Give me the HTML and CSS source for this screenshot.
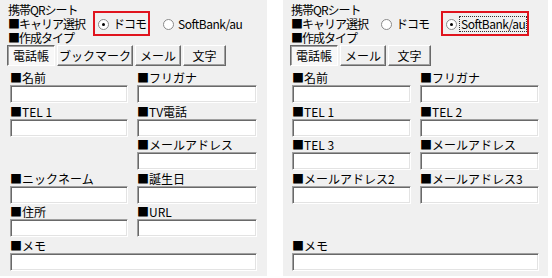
FILE: index.html
```html
<!DOCTYPE html>
<html lang="ja">
<head>
    <meta charset="UTF-8">
    <title>携帯QRシート</title>
    <link rel="stylesheet" href="styles.css">
</head>
<body>
    <div class="screens">
        <div class="sheet sheet-docomo">
            <div class="line">携帯QRシート</div>
            <div class="line carrier">
                <span class="carrier-lbl">■キャリア選択</span>
                <div class="radios">
                    <label class="opt opt-docomo marked"><span class="dot on"></span><span class="opt-text">ドコモ</span></label>
                    <label class="opt"><span class="dot"></span><span class="opt-text sb">SoftBank/au</span></label>
                </div>
            </div>
            <div class="line">■作成タイプ</div>
            <div class="tabs">
                <button class="tab pressed w-tel">電話帳</button>
                <button class="tab w-bm">ブックマーク</button>
                <button class="tab w-mail">メール</button>
                <button class="tab w-text">文字</button>
            </div>
            <div class="fields">
                <div class="field"><div class="lbl">■名前</div><input type="text"></div>
                <div class="field"><div class="lbl">■フリガナ</div><input type="text"></div>
                <div class="field"><div class="lbl">■TEL 1</div><input type="text"></div>
                <div class="field"><div class="lbl">■TV電話</div><input type="text"></div>
                <div class="field"></div>
                <div class="field"><div class="lbl">■メールアドレス</div><input type="text"></div>
                <div class="field"><div class="lbl">■ニックネーム</div><input type="text"></div>
                <div class="field"><div class="lbl">■誕生日</div><input type="text"></div>
                <div class="field"><div class="lbl">■住所</div><input type="text"></div>
                <div class="field"><div class="lbl">■URL</div><input type="text"></div>
                <div class="field wide"><div class="lbl">■メモ</div><input type="text"></div>
            </div>
        </div>

        <div class="sheet sheet-softbank">
            <div class="line">携帯QRシート</div>
            <div class="line carrier">
                <span class="carrier-lbl">■キャリア選択</span>
                <div class="radios">
                    <label class="opt opt-docomo"><span class="dot"></span><span class="opt-text">ドコモ</span></label>
                    <label class="opt marked"><span class="dot on"></span><span class="opt-text sb focus">SoftBank/au</span></label>
                </div>
            </div>
            <div class="line">■作成タイプ</div>
            <div class="tabs">
                <button class="tab pressed w-tel">電話帳</button>
                <button class="tab w-mail">メール</button>
                <button class="tab w-text">文字</button>
            </div>
            <div class="fields">
                <div class="field"><div class="lbl">■名前</div><input type="text"></div>
                <div class="field"><div class="lbl">■フリガナ</div><input type="text"></div>
                <div class="field"><div class="lbl">■TEL 1</div><input type="text"></div>
                <div class="field"><div class="lbl">■TEL 2</div><input type="text"></div>
                <div class="field"><div class="lbl">■TEL 3</div><input type="text"></div>
                <div class="field"><div class="lbl">■メールアドレス</div><input type="text"></div>
                <div class="field"><div class="lbl">■メールアドレス2</div><input type="text"></div>
                <div class="field"><div class="lbl">■メールアドレス3</div><input type="text"></div>
                <div class="field"></div>
                <div class="field"></div>
                <div class="field wide"><div class="lbl">■メモ</div><input type="text"></div>
            </div>
        </div>
    </div>
</body>
</html>
```

FILE: styles.css
```css
body {
    margin: 0;
    background-color: white;
    font-family: "Noto Sans CJK JP", "Noto Sans", sans-serif;
    font-size: 12px;
    color: black;
}
.screens { display: flex; gap: 16px; }
.sheet {
    background-color: #f0f0f0;
    height: 276px;
    box-sizing: border-box;
    padding: 3px 8px 0 8px;
}
.sheet-docomo { width: 267px; }
.sheet-softbank { width: 265px; }
.line { height: 14px; line-height: 14px; white-space: nowrap; letter-spacing: -1px; }

.carrier { display: flex; }
.carrier-lbl { width: 90px; flex: none; }
.radios { display: flex; align-items: center; letter-spacing: 0; }
.opt { position: relative; display: flex; align-items: center; gap: 3px; }
.opt-docomo { margin-right: 16px; }
.opt-docomo .opt-text { letter-spacing: -1px; }
.dot {
    width: 11px; height: 11px;
    box-sizing: border-box;
    border-radius: 50%;
    border: 1px solid #8a8a8a;
    background-color: white;
    display: flex; align-items: center; justify-content: center;
}
.dot.on::before {
    content: "";
    width: 3px; height: 3px;
    border-radius: 50%;
    background-color: black;
}
.opt-text { padding: 0 1px; }
.opt-text.sb { letter-spacing: -0.5px; }
.opt-text.focus { outline: 1px dotted #333; outline-offset: 0; }
.marked::after {
    content: "";
    position: absolute;
    top: -6px; bottom: -5px; left: -5px; right: -3px;
    border: 2px solid #e0141e;
}

.tabs { display: flex; gap: 2px; margin-left: -1px; height: 21px; }
.tab {
    font: inherit;
    padding: 0;
    background-color: #f0f0f0;
    border: 1px solid;
    border-color: white #696969 #696969 white;
    box-shadow: inset -1px -1px 0 #a0a0a0;
    color: black;
}
.tab.pressed {
    border-color: #696969 white white #696969;
    box-shadow: inset 1px 1px 0 #a0a0a0;
    background-color: #f8f8f8;
}
.w-tel { width: 48px; }
.w-bm { width: 76px; }
.w-mail { width: 46px; }
.w-text { width: 43px; }

.fields {
    display: grid;
    column-gap: 9px;
    grid-auto-rows: 33.6px;
    margin-top: 5px;
}
.sheet-docomo .fields { grid-template-columns: 118px 120px; margin-left: 2px; }
.sheet-softbank .fields { grid-template-columns: 119px 119px; margin-left: 1px; }
.field.wide { grid-column: span 2; }
.lbl { height: 14px; line-height: 14px; white-space: nowrap; }
.field input {
    display: block;
    width: 100%; height: 18px;
    box-sizing: border-box;
    margin: 0;
    border: 1px solid;
    border-color: #a0a0a0 white white #a0a0a0;
    box-shadow: inset 1px 1px 0 #696969, inset -1px -1px 0 #e3e3e3;
    background-color: white;
}
```
